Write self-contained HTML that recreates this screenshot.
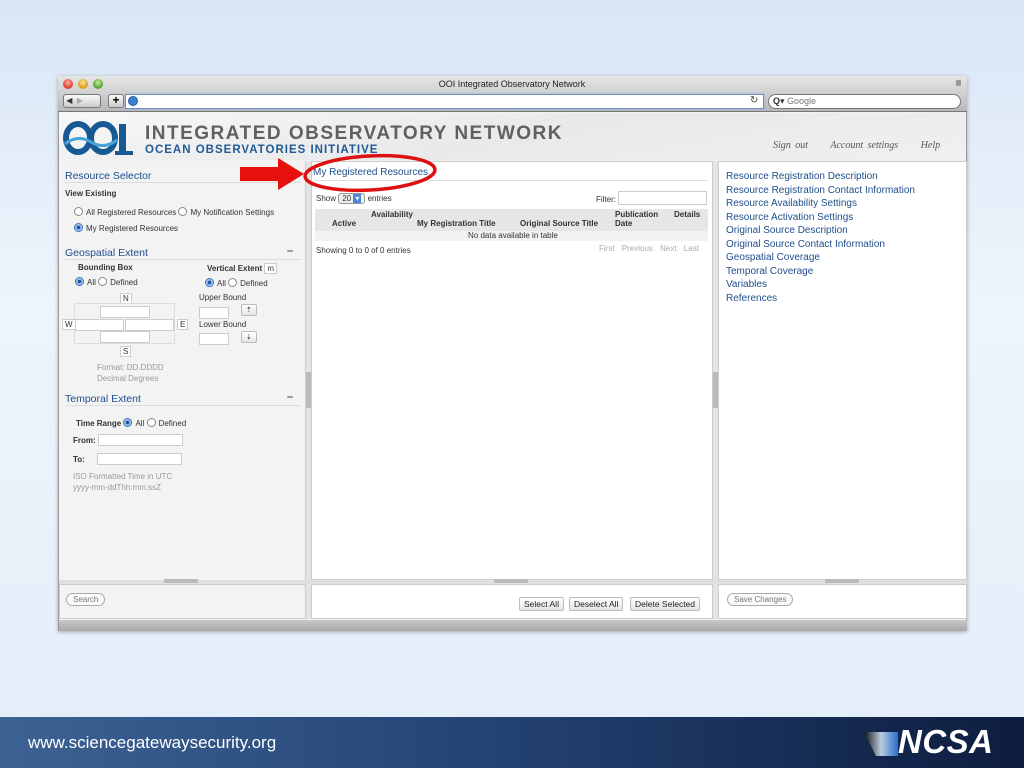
<!DOCTYPE html>
<html><head><meta charset="utf-8"><style>
*{margin:0;padding:0;box-sizing:border-box}
body{width:1024px;height:768px;position:relative;overflow:hidden;font-family:"Liberation Sans","DejaVu Sans",sans-serif;background:linear-gradient(#d9e6f6,#eef4fc 40%,#e3edf9);}
.a{position:absolute}
.t{font-size:8px;color:#333;white-space:nowrap}
.b{font-weight:bold}
.h{color:#1f4e8c;font-size:10.5px;white-space:nowrap}
.rad{display:inline-block;width:9px;height:9px;border:1px solid #888;border-radius:50%;background:#fff;vertical-align:-1px;margin-right:3px}
.rad.on{background:radial-gradient(#1c4f9a 30%,#6fa0e0 35%,#bcd5f3 70%);border-color:#3a6fb8}
.in{position:absolute;background:#fff;border:1px solid #ccc;height:12px}
.btn{position:absolute;border:1px solid #bbb;border-radius:2px;background:linear-gradient(#fff,#e4e4e4);font-size:8.5px;padding:1px 4px;color:#222}
.pill{position:absolute;border:1px solid #aaa;border-radius:8px;background:#fbfbfb;font-size:8px;padding:1px 6px;color:#777}
.rl{font-size:10px;color:#1f4e8c;line-height:13.5px;white-space:nowrap}
.grip{position:absolute;height:4px;width:34px;background:#bbb}
</style></head><body>
<div class="a" style="left:58px;top:76px;width:909px;height:555px;background:#f2f2f2;border:1px solid #999;box-shadow:0 1px 4px rgba(0,0,0,.3)"></div>
<div class="a" style="left:58px;top:76px;width:909px;height:36px;background:linear-gradient(#e6e6e6,#b8b8b8);border-bottom:1px solid #777"></div>
<div class="a" style="left:63px;top:79px;width:10px;height:10px;border-radius:50%;background:radial-gradient(circle at 50% 35%,#ffb3a8,#e0443a 60%)"></div>
<div class="a" style="left:78px;top:79px;width:10px;height:10px;border-radius:50%;background:radial-gradient(circle at 50% 35%,#ffe6a0,#e0a020 60%)"></div>
<div class="a" style="left:93px;top:79px;width:10px;height:10px;border-radius:50%;background:radial-gradient(circle at 50% 35%,#c8f0a0,#5aa83a 60%)"></div>
<div class="a t" style="left:0;width:1024px;top:79px;text-align:center;font-size:9px;color:#222">OOI Integrated Observatory Network</div>
<div class="a" style="left:956px;top:80px;width:5px;height:6px;background:#999;border-radius:1px"></div>
<div class="a" style="left:63px;top:94px;width:38px;height:14px;border:1px solid #777;border-radius:3px;background:linear-gradient(#fafafa,#ccc);font-size:8px;line-height:12px;color:#333">&nbsp;◀&nbsp;&nbsp;<span style="color:#aaa">▶</span></div>
<div class="a" style="left:108px;top:94px;width:16px;height:14px;border:1px solid #777;border-radius:3px;background:linear-gradient(#fafafa,#ccc);font-size:12px;line-height:11px;text-align:center;font-weight:bold">+</div>
<div class="a" style="left:125px;top:94px;width:639px;height:15px;border:1px solid #6d8fc4;background:#fff;box-shadow:0 0 2px #8fb0e0"></div>
<div class="a" style="left:128px;top:96px;width:10px;height:10px;border-radius:50%;background:#3b7fd0;border:1px solid #2a5a9a"></div>
<div class="a t" style="left:750px;top:95px;font-size:10px;color:#444">↻</div>
<div class="a" style="left:768px;top:94px;width:193px;height:15px;border:1px solid #777;border-radius:8px;background:#fff"></div>
<div class="a t" style="left:773px;top:96px;font-size:9px;color:#777"><b style="color:#333">Q▾</b> Google</div>
<div class="a" style="left:59px;top:113px;width:907px;height:47px;background:linear-gradient(170deg,#f8f8f8,#e8e9ea 50%,#f0f0f0)"></div>
<svg class="a" style="left:63px;top:120px" width="72" height="38">
<ellipse cx="15" cy="18" rx="12" ry="14" fill="none" stroke="#175a93" stroke-width="6"/>
<ellipse cx="40" cy="18" rx="12" ry="14" fill="none" stroke="#175a93" stroke-width="6"/>
<rect x="56" y="4" width="7" height="28" fill="#175a93"/>
<path d="M52 33 H70" stroke="#175a93" stroke-width="4"/>
<path d="M2 24 Q15 14 28 22 T54 20" fill="none" stroke="#4aa3d8" stroke-width="3"/>
</svg>
<div class="a b" style="left:145px;top:123px;font-size:19px;color:#606060;letter-spacing:1.5px;white-space:nowrap">INTEGRATED OBSERVATORY NETWORK</div>
<div class="a b" style="left:145px;top:144px;font-size:11.5px;color:#1f5a94;letter-spacing:1px;white-space:nowrap">OCEAN OBSERVATORIES INITIATIVE</div>
<div class="a" style="left:773px;top:140px;font:italic 10px 'Liberation Serif',serif;color:#555;white-space:nowrap;word-spacing:2px">Sign out &nbsp;&nbsp;&nbsp; Account settings &nbsp;&nbsp;&nbsp; Help</div>
<div class="a" style="left:59px;top:161px;width:247px;height:419px;background:#f3f3f3;border-right:1px solid #ccc"></div>
<div class="a" style="left:306px;top:161px;width:5px;height:458px;background:#e4e4e4"></div>
<div class="a" style="left:306px;top:372px;width:5px;height:36px;background:#bbb"></div>
<div class="a" style="left:311px;top:161px;width:402px;height:419px;background:#fff;border:1px solid #ccc"></div>
<div class="a" style="left:713px;top:161px;width:5px;height:458px;background:#e4e4e4"></div>
<div class="a" style="left:713px;top:372px;width:5px;height:36px;background:#bbb"></div>
<div class="a" style="left:718px;top:161px;width:249px;height:419px;background:#fff;border:1px solid #ccc"></div>
<div class="a" style="left:59px;top:580px;width:908px;height:4px;background:#e0e0e0"></div>
<div class="grip" style="left:164px;top:579px"></div><div class="grip" style="left:494px;top:579px"></div><div class="grip" style="left:825px;top:579px"></div>
<div class="a" style="left:59px;top:584px;width:247px;height:35px;background:#f3f3f3;border:1px solid #ccc"></div>
<div class="a" style="left:311px;top:584px;width:402px;height:35px;background:#fff;border:1px solid #ccc"></div>
<div class="a" style="left:718px;top:584px;width:249px;height:35px;background:#fff;border:1px solid #ccc"></div>
<div class="a" style="left:59px;top:620px;width:908px;height:11px;background:linear-gradient(#c8c8c8,#a8a8a8)"></div>
<div class="a h" style="left:65px;top:170px">Resource Selector</div>
<div class="a" style="left:65px;top:182px;width:236px;height:1px;background:#ddd"></div>
<div class="a t b" style="left:65px;top:189px">View Existing</div>
<div class="a t" style="left:74px;top:207px"><span class="rad"></span>All Registered Resources <span class="rad"></span>My Notification Settings</div>
<div class="a t" style="left:74px;top:223px"><span class="rad on"></span>My Registered Resources</div>
<div class="a h" style="left:65px;top:247px">Geospatial Extent</div>
<div class="a t b" style="left:287px;top:245px;font-size:11px;color:#555">–</div>
<div class="a" style="left:65px;top:259px;width:236px;height:1px;background:#ddd"></div>
<div class="a t b" style="left:78px;top:263px">Bounding Box</div>
<div class="a t b" style="left:207px;top:264px">Vertical Extent <span style="border:1px solid #ccc;background:#fff;padding:0 2px;font-weight:normal">m</span></div>
<div class="a t" style="left:75px;top:277px"><span class="rad on"></span>All <span class="rad"></span>Defined</div>
<div class="a t" style="left:205px;top:278px"><span class="rad on"></span>All <span class="rad"></span>Defined</div>
<div class="a t" style="left:120px;top:293px;border:1px solid #ccc;background:#fff;padding:0 2px">N</div>
<div class="a" style="left:74px;top:303px;width:101px;height:41px;border:1px solid #ddd"></div>
<div class="in" style="left:100px;top:306px;width:50px"></div>
<div class="t a" style="left:62px;top:319px;border:1px solid #ccc;background:#fff;padding:0 2px">W</div>
<div class="in" style="left:75px;top:319px;width:49px"></div><div class="in" style="left:125px;top:319px;width:49px"></div>
<div class="t a" style="left:177px;top:319px;border:1px solid #ccc;background:#fff;padding:0 2px">E</div>
<div class="in" style="left:100px;top:331px;width:50px"></div>
<div class="a t" style="left:120px;top:346px;border:1px solid #ccc;background:#fff;padding:0 2px">S</div>
<div class="a t" style="left:97px;top:362px;color:#999;line-height:11px">Format: DD.DDDD<br>Decimal Degrees</div>
<div class="a t" style="left:199px;top:293px">Upper Bound</div>
<div class="in" style="left:199px;top:307px;width:30px"></div>
<div class="btn" style="left:241px;top:304px;font-size:7px">⇡</div>
<div class="a t" style="left:199px;top:320px">Lower Bound</div>
<div class="in" style="left:199px;top:333px;width:30px"></div>
<div class="btn" style="left:241px;top:331px;font-size:7px">⇣</div>
<div class="a h" style="left:65px;top:393px">Temporal Extent</div>
<div class="a t b" style="left:287px;top:391px;font-size:11px;color:#555">–</div>
<div class="a" style="left:65px;top:405px;width:236px;height:1px;background:#ddd"></div>
<div class="a t" style="left:76px;top:418px"><b>Time Range</b> <span class="rad on"></span>All <span class="rad"></span>Defined</div>
<div class="a t b" style="left:73px;top:436px">From:</div><div class="in" style="left:98px;top:434px;width:85px"></div>
<div class="a t b" style="left:73px;top:455px">To:</div><div class="in" style="left:97px;top:453px;width:85px"></div>
<div class="a t" style="left:73px;top:471px;color:#999;line-height:11px">ISO Formatted Time in UTC<br>yyyy-mm-ddThh:mm:ssZ</div>
<div class="pill" style="left:66px;top:593px">Search</div>
<div class="a h" style="left:313px;top:167px;font-size:10px">My Registered Resources</div>
<div class="a" style="left:315px;top:180px;width:393px;height:1px;background:#ddd"></div>
<svg class="a" style="left:300px;top:152px" width="142" height="44"><ellipse cx="70" cy="21" rx="65" ry="17" fill="none" stroke="#d11" stroke-width="3.5" transform="rotate(-3 70 21)"/></svg>
<svg class="a" style="left:238px;top:156px" width="68" height="36"><polygon points="2,11 40,11 40,2 66,18 40,34 40,25 2,25" fill="#e8100c"/></svg>
<div class="a t" style="left:316px;top:194px">Show <span style="border:1px solid #999;border-radius:3px;padding:0 3px;background:#eee">20 <span style="background:#4a86d8;color:#fff;padding:0 2px">▾</span></span> entries</div>
<div class="a t" style="left:596px;top:195px">Filter:</div>
<div class="in" style="left:618px;top:191px;width:89px;height:14px"></div>
<div class="a" style="left:315px;top:209px;width:393px;height:22px;background:#e6e6e6"></div>
<div class="a t b" style="left:371px;top:210px">Availability</div>
<div class="a t b" style="left:332px;top:219px">Active</div>
<div class="a t b" style="left:417px;top:219px">My Registration Title</div>
<div class="a t b" style="left:520px;top:219px">Original Source Title</div>
<div class="a t b" style="left:615px;top:210px;line-height:9px">Publication<br>Date</div>
<div class="a t b" style="left:674px;top:210px">Details</div>
<div class="a" style="left:315px;top:231px;width:393px;height:10px;background:#f2f2f2"></div>
<div class="a t" style="left:468px;top:231px">No data available in table</div>
<div class="a t" style="left:316px;top:246px">Showing 0 to 0 of 0 entries</div>
<div class="a t" style="left:599px;top:244px;color:#aaa;word-spacing:5px">First Previous Next Last</div>
<div class="btn" style="left:519px;top:597px">Select All</div>
<div class="btn" style="left:569px;top:597px">Deselect All</div>
<div class="btn" style="left:630px;top:597px">Delete Selected</div>
<div class="a rl" style="left:726px;top:170px">Resource Registration Description<br>Resource Registration Contact Information<br>Resource Availability Settings<br>Resource Activation Settings<br>Original Source Description<br>Original Source Contact Information<br>Geospatial Coverage<br>Temporal Coverage<br>Variables<br>References</div>
<div class="pill" style="left:727px;top:593px">Save Changes</div>
<div class="a" style="left:0;top:717px;width:1024px;height:51px;background:linear-gradient(90deg,#3d6294,#27487a 40%,#0d1d3f)"></div>
<div class="a" style="left:28px;top:733px;font-size:17px;color:#fff;white-space:nowrap">www.sciencegatewaysecurity.org</div>
<svg class="a" style="left:862px;top:730px" width="40" height="28"><defs><linearGradient id="g" x1="0" x2="1"><stop offset="0" stop-color="#111"/><stop offset=".5" stop-color="#bcd"/><stop offset="1" stop-color="#2a6cd0"/></linearGradient></defs><polygon points="2,2 36,2 36,26 14,26" fill="url(#g)"/></svg>
<div class="a" style="left:898px;top:723px;font:italic bold 33px 'Liberation Sans',sans-serif;color:#fff;letter-spacing:0.5px">NCSA</div>
</body></html>
